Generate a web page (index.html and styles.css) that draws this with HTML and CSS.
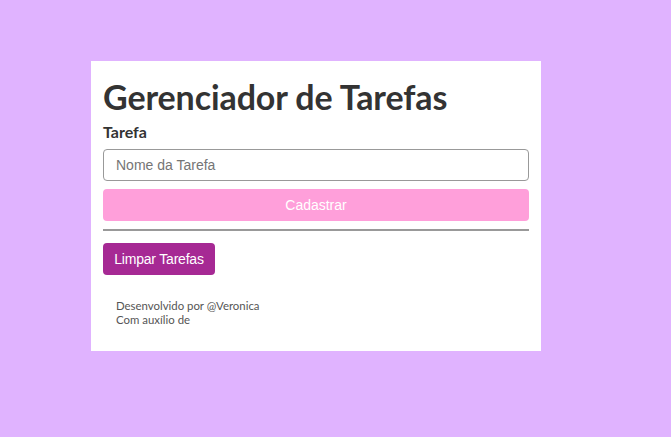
FILE: index.html
```html
<!DOCTYPE html>
<html lang="pt-BR">
<head>
<meta charset="utf-8">
<title>Gerenciador de Tarefas</title>
<link rel="stylesheet" href="styles.css">
</head>
<body>
<main class="card">
  <h1 class="title">Gerenciador de Tarefas</h1>
  <label class="label" for="tarefa">Tarefa</label>
  <input class="input" id="tarefa" type="text" placeholder="Nome da Tarefa">
  <button class="btn btn-add" type="button">Cadastrar</button>
  <hr class="divider">
  <div class="actions">
    <button class="btn btn-clear" type="button">Limpar Tarefas</button>
  </div>
  <footer class="footer">
    <p>Desenvolvido por @Veronica</p>
    <p>Com auxílio de</p>
  </footer>
</main>
</body>
</html>
```

FILE: styles.css
```css
html, body {
  margin: 0;
  padding: 0;
}
body {
  background: #e0b3ff;
  font-family: "Lato", "Open Sans", sans-serif;
  color: #333;
  padding: 61px 0 0 91px;
}
.card {
  width: 450px;
  height: 290px;
  box-sizing: border-box;
  background: #fff;
  padding: 16px 12px 0 12px;
  display: flex;
  flex-direction: column;
}
.title {
  margin: 0;
  font-family: "Lato", sans-serif;
  font-weight: 700;
  font-size: 34px;
  line-height: 40px;
  color: #333;
  letter-spacing: -0.1px;
}
.label {
  margin-top: 4px;
  font-family: "Lato", sans-serif;
  font-weight: 700;
  font-size: 16px;
  line-height: 22px;
  color: #333;
}
.input {
  margin-top: 6px;
  height: 32px;
  box-sizing: border-box;
  border: 1px solid #999;
  border-radius: 4px;
  padding: 0 12px;
  font-family: "Liberation Sans", Arial, sans-serif;
  font-size: 14px;
  color: #333;
  outline: none;
}
.input::placeholder {
  color: #757575;
}
.btn {
  height: 32px;
  border: none;
  border-radius: 4px;
  font-family: "Liberation Sans", Arial, sans-serif;
  font-size: 14px;
  color: #fff;
  padding: 0 12px;
  white-space: nowrap;
}
.btn-add {
  margin-top: 8px;
  background: #ff9fda;
  width: 100%;
}
.divider {
  margin: 8px 0 0 0;
  border: none;
  height: 2px;
  background: #999;
}
.actions {
  margin-top: 12px;
  display: flex;
}
.btn-clear {
  background: #a62994;
  width: 112px;
  padding: 0;
  letter-spacing: -0.2px;
}
.footer {
  margin-top: 24px;
  padding-left: 13px;
  font-family: "Lato", sans-serif;
  font-size: 11.4px;
  line-height: 14px;
  color: #555;
}
.footer p {
  margin: 0;
}
```
